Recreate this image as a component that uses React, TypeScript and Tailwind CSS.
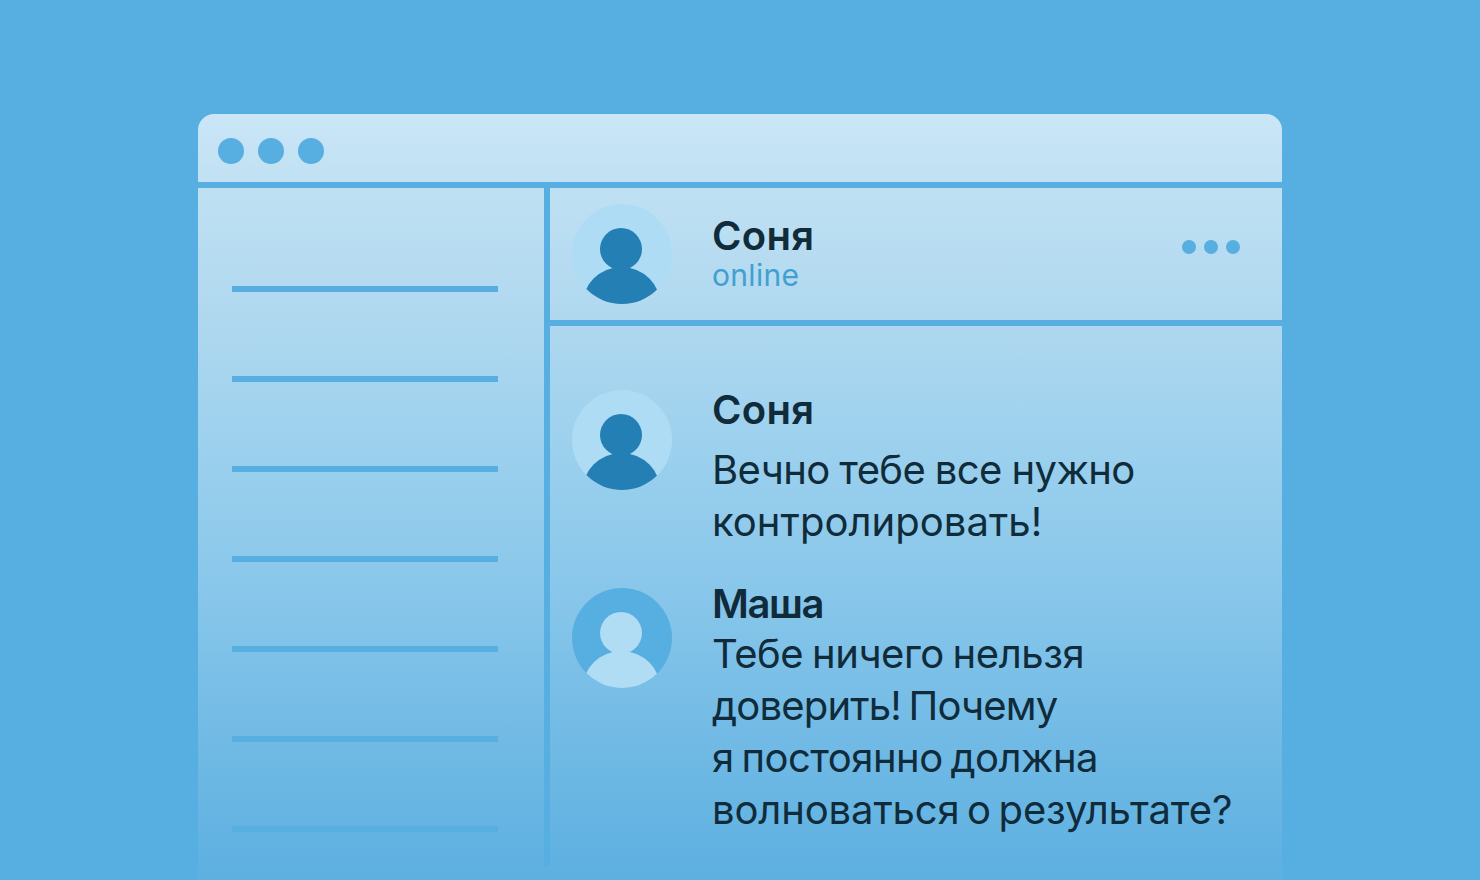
import { clsx } from "clsx"

const sidebarRows = [1, 2, 3, 4, 5, 6, 7]

function Avatar({ id, inverted = false }: { id: string; inverted?: boolean }) {
  return (
    <svg viewBox="0 0 100 100" className="h-[100px] w-[100px] shrink-0">
      <clipPath id={id}>
        <circle cx="50" cy="50" r="50" />
      </clipPath>
      <circle cx="50" cy="50" r="50" className={inverted ? "fill-[#57aee0]" : "fill-[#afdcf5]"} />
      <g clipPath={`url(#${id})`} className={inverted ? "fill-[#b0dcf4]" : "fill-[#247fb4]"}>
        <circle cx="49" cy="45" r="21" />
        <circle cx="49.5" cy="102.5" r="39.5" />
      </g>
    </svg>
  )
}

function Name({ children, className }: { children: string; className?: string }) {
  return <h2 className={clsx("w-max text-[40px] leading-[52px] font-semibold", className)}>{children}</h2>
}

function Sidebar() {
  return (
    <aside className="flex w-[346px] shrink-0 flex-col gap-[84px] pt-[98px] pl-[34px]">
      {sidebarRows.map((row) => (
        <div key={row} className="h-1.5 w-[266px] shrink-0 bg-[#57aee0]" />
      ))}
    </aside>
  )
}

function ChatHeader() {
  return (
    <header className="flex h-[138px] shrink-0 items-start border-b-[6px] border-[#57aee0] pl-[22px]">
      <div className="pt-4">
        <Avatar id="header-avatar" />
      </div>
      <div className="ml-10 grow pt-[22px]">
        <Name className="tracking-[0.3px]">Соня</Name>
        <p className="-mt-[5px] w-max text-[30px] leading-[36px] tracking-[0.3px] text-[#429fd1]">online</p>
      </div>
      <div className="mt-[52px] mr-[42px] flex gap-2">
        <span className="size-3.5 rounded-full bg-[#57aee0]" />
        <span className="size-3.5 rounded-full bg-[#57aee0]" />
        <span className="size-3.5 rounded-full bg-[#57aee0]" />
      </div>
    </header>
  )
}

export default function App() {
  return (
    <main className="h-[880px] w-[1480px] overflow-hidden bg-[#57aee0] px-[198px] pt-[114px] font-['Inter',sans-serif] text-[#102b3a]">
      <div className="flex h-[766px] flex-col overflow-hidden rounded-t-[16px] bg-[linear-gradient(180deg,#cae6f7_0px,#bfe0f3_76px,#afd8ef_206px,#9dd1ee_326px,#87c6ea_486px,#71bae5_626px,#5db0e1_766px)]">
        <div className="flex h-[74px] shrink-0 items-center gap-3.5 border-b-[6px] border-[#57aee0] px-5 pt-1.5">
          <span className="size-[26px] rounded-full bg-[#57aee0]" />
          <span className="size-[26px] rounded-full bg-[#57aee0]" />
          <span className="size-[26px] rounded-full bg-[#57aee0]" />
        </div>
        <div className="flex min-h-0 grow">
          <Sidebar />
          <div className="h-[678px] w-1.5 shrink-0 bg-[#57aee0]" />
          <section className="flex grow flex-col">
            <ChatHeader />
            <div className="flex h-[198px] shrink-0 pl-[22px] mt-16">
              <Avatar id="sonya-avatar" />
              <div className="ml-10 -mt-1.5">
                <Name className="tracking-[0.3px]">Соня</Name>
                <div className="mt-2 text-[40px] leading-[52px] whitespace-nowrap">
                  <p className="w-max tracking-[-0.6px] [word-spacing:-1px]">Вечно тебе все нужно</p>
                  <p className="w-max tracking-[0.05px]">контролировать!</p>
                </div>
              </div>
            </div>
            <div className="flex pl-[22px]">
              <Avatar id="masha-avatar" inverted />
              <div className="ml-10 -mt-2.5">
                <Name className="tracking-[-1.4px]">Маша</Name>
                <div className="-mt-0.5 text-[40px] leading-[52px] whitespace-nowrap">
                  <p className="w-max tracking-[-0.45px] [word-spacing:-2px]">Тебе ничего нельзя</p>
                  <p className="w-max tracking-[-0.8px] [word-spacing:-3px]">доверить! Почему</p>
                  <p className="w-max tracking-[-0.5px] [word-spacing:-3px]">я постоянно должна</p>
                  <p className="w-max tracking-[-0.13px] [word-spacing:-3.5px]">волноваться о результате?</p>
                </div>
              </div>
            </div>
          </section>
        </div>
      </div>
    </main>
  )
}
